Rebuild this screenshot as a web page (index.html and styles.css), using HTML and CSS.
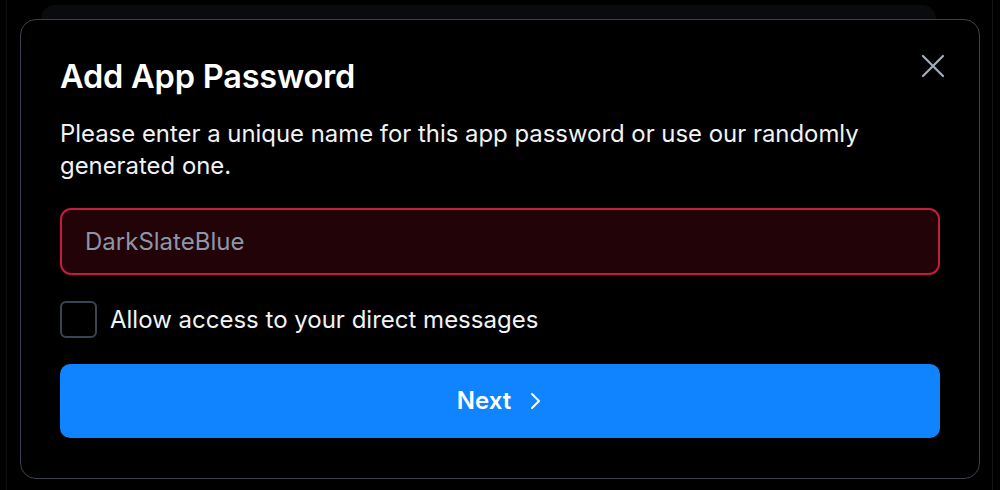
FILE: index.html
```html
<!DOCTYPE html>
<html lang="en">
<head>
  <meta charset="UTF-8">
  <meta name="viewport" content="width=device-width, initial-scale=1.0">
  <title>Add App Password</title>
  <link rel="stylesheet" href="styles.css">
</head>
<body>

  <div class="backdrop">
    <div class="behind-card"></div>

    <div class="dialog">
      <div class="dialog-head">
        <h2>Add App Password</h2>
        <button type="button" class="close" aria-label="Close">
          <svg width="26" height="26" viewBox="0 0 26 26" fill="none" stroke="#a3adbd" stroke-width="2.2" stroke-linecap="round">
            <path d="M3 3L23 23M23 3L3 23"/>
          </svg>
        </button>
      </div>

      <p class="intro">Please enter a unique name for this app password or use our randomly generated one.</p>

      <input type="text" class="name-input" placeholder="DarkSlateBlue">

      <label class="check-row">
        <span class="box"></span>
        <span>Allow access to your direct messages</span>
      </label>

      <button type="button" class="next">
        Next
        <svg width="16" height="20" viewBox="0 0 16 20" fill="none" stroke="#fff" stroke-width="2" stroke-linecap="round" stroke-linejoin="round">
          <path d="M5 3L12 10L5 17"/>
        </svg>
      </button>
    </div>
  </div>

</body>
</html>
```

FILE: styles.css
```css
html, body {
  margin: 0;
  padding: 0;
  height: 100%;
}

body {
  font-family: Inter, "Noto Sans", sans-serif;
  background-color: #000;
  color: #f1f3f5;
}

.backdrop {
  position: relative;
  height: 490px;
  overflow: hidden;
  border-left: 1px solid #0d0f12;
  margin-left: 6px;
  margin-right: 7px;
  border-right: 1px solid #121519;
}

.behind-card {
  position: absolute;
  left: 34px;
  right: 56px;
  top: 5px;
  height: 60px;
  background-color: #0a0b0e;
  border-radius: 14px;
}

.dialog {
  position: absolute;
  left: 13px;
  top: 19px;
  width: 880px;
  height: 378px;
  padding: 40px 39px;
  background-color: #000;
  border: 1px solid #3a414c;
  border-radius: 16px;
  display: flex;
  flex-direction: column;
}

.dialog-head {
  display: flex;
  justify-content: space-between;
  align-items: flex-start;
}

h2 {
  margin: 0;
  font-size: 32.5px;
  font-weight: 600;
  line-height: 34px;
  color: #fff;
  letter-spacing: -0.2px;
}

.close {
  background: none;
  border: none;
  padding: 0;
  margin: -7px -6px 0 0;
  cursor: pointer;
  line-height: 0;
}

.intro {
  margin: 24px 0 0;
  font-size: 23.9px;
  line-height: 32px;
  color: #f1f3f5;
}

.name-input {
  margin-top: 26px;
  height: 67px;
  box-sizing: border-box;
  width: 100%;
  padding: 0 23px;
  font-family: inherit;
  font-size: 24px;
  color: #fff;
  background-color: #220308;
  border: 2px solid #c41d40;
  border-radius: 11px;
  outline: none;
}

.name-input::placeholder {
  color: #8d96a8;
}

.check-row {
  margin-top: 26px;
  display: flex;
  align-items: center;
  gap: 13px;
  font-size: 24px;
  color: #f1f3f5;
}

.box {
  width: 33px;
  height: 33px;
  border: 2px solid #3b4452;
  border-radius: 6px;
}

.next {
  margin-top: 26px;
  height: 75px;
  width: 100%;
  border: none;
  border-radius: 10px;
  background-color: #1083fe;
  color: #fff;
  font-family: inherit;
  font-size: 24px;
  font-weight: 600;
  display: flex;
  align-items: center;
  justify-content: center;
  gap: 16px;
  cursor: pointer;
}
```
